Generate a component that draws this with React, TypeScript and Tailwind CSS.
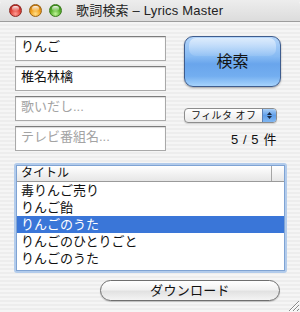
import type { ReactNode } from "react";

const FONT = "font-['Liberation_Sans','Noto_Sans_CJK_JP',sans-serif]";

const ROWS = ["毒りんご売り", "りんご飴", "りんごのうた", "りんごのひとりごと", "りんごのうた"];

function Light({ tone }: { tone: "red" | "amber" | "green" }) {
  const fill =
    tone === "red"
      ? "bg-[radial-gradient(circle_at_50%_80%,#ff9d94_0%,#e2473d_45%,#a51d16_100%)] border-[#8c2a24]"
      : tone === "amber"
        ? "bg-[radial-gradient(circle_at_50%_80%,#ffe08a_0%,#f3a31f_45%,#b0640a_100%)] border-[#9a6414]"
        : "bg-[radial-gradient(circle_at_50%_80%,#c2f59a_0%,#5cb632_45%,#2f7a12_100%)] border-[#3b7a1e]";
  return (
    <div className={`relative h-[13px] w-[13px] rounded-full border ${fill}`}>
      <div className="absolute left-[2px] top-[1px] h-[5px] w-[7px] rounded-full bg-[linear-gradient(to_bottom,rgba(255,255,255,0.9),rgba(255,255,255,0.1))]" />
    </div>
  );
}

function Field({ children, placeholder }: { children: ReactNode; placeholder?: boolean }) {
  return (
    <div
      className={`flex h-[25px] items-center border border-[#a9a9a9] border-t-[#7c7c7c] bg-white px-[5px] pb-[3px] text-[13px] shadow-[inset_0_1px_1px_rgba(0,0,0,0.15)] ${
        placeholder ? "text-[#a3a3a3]" : "text-[#111]"
      }`}
    >
      {children}
    </div>
  );
}

export default function App() {
  return (
    <div
      className={`${FONT} relative h-[312px] w-[300px] overflow-hidden bg-[repeating-linear-gradient(to_bottom,#ededed_0px,#ededed_2px,#f5f5f5_2px,#f5f5f5_4px)]`}
    >
      <div className="flex h-[22px] items-center rounded-t-[5px] border-b border-[#9d9d9d] bg-[linear-gradient(to_bottom,#ededed,#dcdcdc)] pl-[9px]">
        <div className="flex gap-[7px]">
          <Light tone="red" />
          <Light tone="amber" />
          <Light tone="green" />
        </div>
        <div className="ml-[14px] text-[13px] tracking-[0.2px] text-[#222]">歌詞検索 – Lyrics Master</div>
      </div>

      <div className="pl-[15px] pt-[14px]">
        <div className="flex">
          <div className="flex w-[151px] flex-col gap-[5px]">
            <Field>りんご</Field>
            <Field>椎名林檎</Field>
            <Field placeholder>歌いだし...</Field>
            <Field placeholder>テレビ番組名...</Field>
          </div>

          <div className="ml-[18px] flex w-[97px] flex-col">
            <button className="relative h-[51px] w-[97px] overflow-hidden rounded-[9px] border border-[#3f5d8e] bg-[linear-gradient(to_bottom,#b4d5fa_0%,#86baf3_40%,#69a5ec_55%,#73aef0_80%,#a6d3fc_100%)] text-[16px] text-[#151515] shadow-[0_1px_2px_rgba(0,0,0,0.35)]">
              <span className="absolute inset-x-[4px] top-[1px] h-[18px] rounded-[7px] bg-[linear-gradient(to_bottom,rgba(255,255,255,0.55),rgba(255,255,255,0.1))]" />
              <span className="relative">検索</span>
            </button>

            <div className="mt-[21px] flex h-[15px] w-[93px] overflow-hidden rounded-[4px] border border-[#8d8d8d] bg-[linear-gradient(to_bottom,#ffffff,#e9e9e9)] shadow-[0_1px_1px_rgba(0,0,0,0.15)]">
              <div className="flex flex-1 items-center pl-[6px] text-[10px] leading-none tracking-[0.4px] whitespace-nowrap text-[#111]">フィルタ オフ</div>
              <div className="flex w-[14px] flex-col items-center justify-center gap-[1px] border-l border-[#5b7fb5] bg-[linear-gradient(to_bottom,#a9cff8,#5f9ee9_50%,#7fb6f2)]">
                <svg width="5" height="3" viewBox="0 0 5 3"><path d="M0 3 L2.5 0 L5 3Z" fill="#1b2a44" /></svg>
                <svg width="5" height="3" viewBox="0 0 5 3"><path d="M0 0 L2.5 3 L5 0Z" fill="#1b2a44" /></svg>
              </div>
            </div>

            <div className="mt-[10px] pr-[4px] text-right text-[13px] leading-none tracking-[0.6px] text-[#111]">5 / 5 件</div>
          </div>
        </div>

        <div className="-ml-[1px] mt-[12px] w-[273px] rounded-[3px] border-2 border-[#b2cbeb]">
          <div className="h-[106px] border border-[#7fa3d3] bg-white">
            <div className="flex h-[16px] border-b border-[#9a9a9a] bg-[linear-gradient(to_bottom,#ffffff,#e6e6e6)] text-[12px] leading-[15px] text-[#111]">
              <div className="flex-1 pl-[4px]">タイトル</div>
              <div className="w-[13px] border-l border-[#a5a5a5]" />
            </div>
            {ROWS.map((r, i) => (
              <div
                key={i}
                className={`h-[17px] pl-[4px] text-[13px] leading-[17px] ${
                  i === 2 ? "bg-[#3a76d8] text-white" : "text-[#111]"
                }`}
              >
                {r}
              </div>
            ))}
          </div>
        </div>

        <div className="mt-[7px] flex pl-[85px]">
          <button className="h-[21px] w-[180px] rounded-full border border-[#6f6f6f] bg-[linear-gradient(to_bottom,#ffffff_0%,#f1f1f1_45%,#e2e2e2_55%,#f4f4f4_100%)] text-[13px] leading-none tracking-[0.3px] text-[#111] shadow-[0_1px_1px_rgba(0,0,0,0.2)]">
            ダウンロード
          </button>
        </div>
      </div>

      <svg className="absolute bottom-0 right-0" width="14" height="14" viewBox="0 0 14 14">
        <path d="M13 3 L3 13 M13 7 L7 13 M13 11 L11 13" stroke="#8a8a8a" strokeWidth="1" />
        <path d="M13 4 L4 13 M13 8 L8 13" stroke="#ffffff" strokeWidth="1" />
      </svg>
    </div>
  );
}
